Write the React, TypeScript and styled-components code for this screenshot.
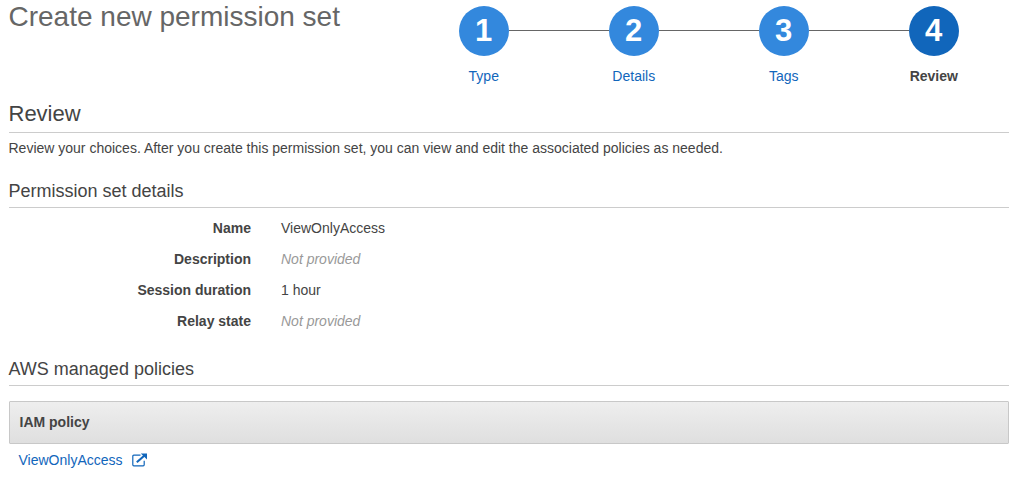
import React from "react";
import styled, { createGlobalStyle } from "styled-components";

const GlobalStyle = createGlobalStyle`
  * { box-sizing: border-box; }
  body {
    margin: 0;
    background: #fff;
    color: #444;
    font: 14px/20px "Liberation Sans", Arial, sans-serif;
    overflow: hidden;
  }
`;

const Page = styled.main`
  padding: 0 8px 0 9px;
  height: 484px;
`;

const Header = styled.header`
  display: flex;
  justify-content: space-between;
  height: 98px;
`;

const Title = styled.h1`
  margin: 0;
  padding-top: 1px;
  font-size: 28px;
  line-height: 32px;
  font-weight: 400;
  text-indent: -0.5px;
  color: #666;
`;

const Steps = styled.ol`
  display: flex;
  list-style: none;
  margin: 0;
  padding: 6px 0 0;
`;

const StepItem = styled.li`
  width: 150px;
  display: flex;
  flex-direction: column;
  align-items: center;
`;

const Track = styled.div`
  display: flex;
  align-items: center;
  align-self: stretch;
`;

const Line = styled.span<{ $visible: boolean }>`
  flex: 1;
  height: 1px;
  margin-bottom: 1px;
  background: ${(p) => (p.$visible ? "#666" : "transparent")};
`;

const Circle = styled.span<{ $active: boolean }>`
  width: 50px;
  height: 50px;
  border-radius: 50%;
  background: ${(p) => (p.$active ? "#1166bb" : "#3388dd")};
  color: #fff;
  font-size: 31px;
  font-weight: 700;
  line-height: 50px;
  text-align: center;
  text-indent: -1px;
`;

const StepLabel = styled.span<{ $active: boolean }>`
  margin-top: 10px;
  text-indent: -0.5px;
  color: ${(p) => (p.$active ? "#444" : "#1166bb")};
  font-weight: ${(p) => (p.$active ? 700 : 400)};
`;

const SectionHeading = styled.h2<{ $large?: boolean }>`
  margin: 0;
  height: ${(p) => (p.$large ? 35 : 32)}px;
  border-bottom: 1px solid #ccc;
  font-size: ${(p) => (p.$large ? 22 : 18)}px;
  line-height: ${(p) => (p.$large ? 32 : 30)}px;
  font-weight: 400;
  text-indent: -0.5px;
`;

const Intro = styled.p`
  margin: 5px 0 18px;
  text-indent: -0.5px;
`;

const Details = styled.dl`
  display: grid;
  grid-template-columns: 242px 1fr;
  column-gap: 30px;
  row-gap: 11px;
  margin: 10px 0 23px;
`;

const Term = styled.dt`
  text-align: right;
  font-weight: 700;
`;

const Value = styled.dd<{ $empty: boolean }>`
  margin: 0;
  color: ${(p) => (p.$empty ? "#999" : "#444")};
  font-style: ${(p) => (p.$empty ? "italic" : "normal")};
`;

const TableHead = styled.div`
  height: 43px;
  margin-top: 15px;
  padding: 0 9.5px;
  border: 1px solid #c8c8c8;
  border-radius: 1px;
  background: linear-gradient(#eee, #dfdfdf);
  font-weight: 700;
  line-height: 41px;
`;

const PolicyLink = styled.a`
  display: flex;
  align-items: center;
  gap: 9px;
  width: max-content;
  padding: 6px 9.5px;
  color: #1166bb;
`;

const steps = ["Type", "Details", "Tags", "Review"];
const details = [
  { label: "Name", value: "ViewOnlyAccess" },
  { label: "Description", value: "" },
  { label: "Session duration", value: "1 hour" },
  { label: "Relay state", value: "" },
];

function ExternalIcon() {
  return (
    <svg width="15" height="14" viewBox="0 0 15 14" fill="none" stroke="#1166bb">
      <path d="M8.5 2.2H1.8Q.8 2.2 .8 3.2v8.6q0 1 1 1h9.4q1 0 1-1V7.8" strokeWidth="1.2" />
      <path d="M4.8 9.3 12.5 2.5" strokeWidth="2.1" />
      <path d="M8.8 .4H15V6.6Z" fill="#1166bb" stroke="none" />
    </svg>
  );
}

export default function App() {
  return (
    <Page>
      <GlobalStyle />
      <Header>
        <Title>Create new permission set</Title>
        <Steps>
          {steps.map((label, i) => {
            const active = i === steps.length - 1;
            return (
              <StepItem key={label}>
                <Track>
                  <Line $visible={i > 0} />
                  <Circle $active={active}>{i + 1}</Circle>
                  <Line $visible={!active} />
                </Track>
                <StepLabel $active={active}>{label}</StepLabel>
              </StepItem>
            );
          })}
        </Steps>
      </Header>
      <SectionHeading $large>Review</SectionHeading>
      <Intro>
        Review your choices. After you create this permission set, you can view and edit the associated policies as needed.
      </Intro>
      <SectionHeading>Permission set details</SectionHeading>
      <Details>
        {details.map(({ label, value }) => (
          <React.Fragment key={label}>
            <Term>{label}</Term>
            <Value $empty={!value}>{value || "Not provided"}</Value>
          </React.Fragment>
        ))}
      </Details>
      <SectionHeading>AWS managed policies</SectionHeading>
      <TableHead>IAM policy</TableHead>
      <PolicyLink>
        ViewOnlyAccess
        <ExternalIcon />
      </PolicyLink>
    </Page>
  );
}
